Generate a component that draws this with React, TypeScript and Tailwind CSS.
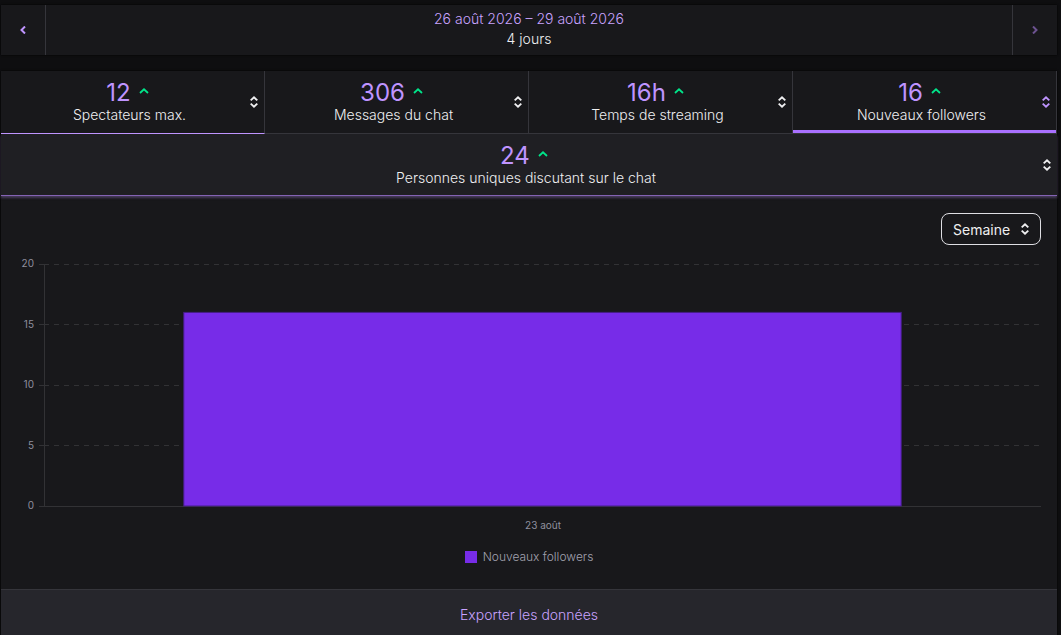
import { useState } from "react";

type Stat = { value: string; label: string };

const stats: Stat[] = [
  { value: "12", label: "Spectateurs max." },
  { value: "306", label: "Messages du chat" },
  { value: "16h", label: "Temps de streaming" },
  { value: "16", label: "Nouveaux followers" },
];

const ticks = [20, 15, 10, 5, 0];
const barValue = 16;
const maxValue = 20;

function Chevron({ direction }: { direction: "left" | "right" }) {
  return (
    <svg width="6" height="8" viewBox="0 0 6 8" fill="none" stroke="currentColor" strokeWidth="2" aria-hidden="true">
      <path d={direction === "left" ? "M5 0.5 1.5 4 5 7.5" : "M1 0.5 4.5 4 1 7.5"} />
    </svg>
  );
}

function UpArrow() {
  return (
    <svg className="mb-0.5" width="10" height="6" viewBox="0 0 10 6" fill="none" stroke="#00e58a" strokeWidth="1.8" aria-hidden="true">
      <path d="M1 5 5 1.3 9 5" />
    </svg>
  );
}

function Sorter() {
  return (
    <svg className="shrink-0" width="8" height="12" viewBox="0 0 8 12" fill="none" stroke="currentColor" strokeWidth="1.9" aria-hidden="true">
      <path d="M0.7 4.4 4 1.4 7.3 4.4M0.7 7.6 4 10.6 7.3 7.6" />
    </svg>
  );
}

function StatContent({ value, label }: Stat) {
  return (
    <span className="flex min-w-0 flex-1 flex-col items-center">
      <span className="flex items-center gap-2 pr-1">
        <span className="pt-0.5 text-2xl leading-6 text-[#bf94ff]">{value}</span>
        <UpArrow />
      </span>
      <span className="text-sm leading-5 font-light text-[#efeff1]">{label}</span>
    </span>
  );
}

function Chart() {
  return (
    <figure className="px-4 pt-3">
      <div className="flex">
        <div className="flex h-[254px] w-[17px] flex-col justify-between text-right text-[10px] leading-3 text-[#8f8f9e]">
          {ticks.map((t) => (
            <span key={t}>{t}</span>
          ))}
        </div>
        <div className="min-w-0 flex-1 pt-[7px] pl-[5px]">
          <svg className="block h-[243px] w-full overflow-visible" role="img" aria-label="Nouveaux followers : 16">
            <g stroke="#323235" strokeWidth="1" shapeRendering="crispEdges">
              {ticks.map((t, i) => {
                const y = Math.floor(i * 60.5) + 0.5;
                return (
                  <g key={t}>
                    <line x1="0" x2="5" y1={y} y2={y} />
                    <line x1="5" x2="100%" y1={y} y2={y} strokeDasharray={t === 0 ? undefined : "5 5"} />
                  </g>
                );
              })}
              <line x1="5.5" x2="5.5" y1="0" y2="243" />
            </g>
            <rect
              x="14.45%"
              y={242 - (barValue / maxValue) * 242}
              width="71.6%"
              height={(barValue / maxValue) * 242}
              fill="#772ce8"
              stroke="#451f86"
              strokeWidth="1"
            />
          </svg>
        </div>
      </div>
      <p className="mt-1 pl-7 text-center text-[10px] leading-5 text-[#8f8f9e]">23 août</p>
      <figcaption className="mt-3 flex h-5 items-center justify-center gap-1.5">
        <span className="size-3 bg-[#772ce8]" />
        <span className="text-xs leading-5 font-light text-[#a2a2b0]">Nouveaux followers</span>
      </figcaption>
    </figure>
  );
}

export default function App() {
  const [selected, setSelected] = useState(3);
  return (
    <div className="min-h-screen bg-[#0e0e10] pt-[5px] pr-1 pl-px font-['Inter',sans-serif] text-[#efeff1]">
      <header className="flex h-[50px] bg-[#18181b] shadow-[0_0_2px_#000]">
        <button aria-label="Période précédente" className="flex w-[45px] items-center justify-center border-r border-[#35353b] text-[#bf94ff]">
          <Chevron direction="left" />
        </button>
        <div className="flex flex-1 flex-col items-center justify-center pb-0.5 text-sm leading-5 font-light">
          <button className="text-[#c9a3ff]">26 août 2026 – 29 août 2026</button>
          <span>4 jours</span>
        </div>
        <button disabled aria-label="Période suivante" className="flex w-[45px] items-center justify-center border-l border-[#35353b] text-[#6c5290]">
          <Chevron direction="right" />
        </button>
      </header>

      <main className="mt-4 bg-[#18181b] shadow-[0_0_2px_#000]">
        <div className="grid grid-cols-4">
          {stats.map((s, i) => (
            <button
              key={s.label}
              aria-pressed={selected === i}
              onClick={() => setSelected(i)}
              className={
                "relative flex h-[63px] items-center border-r border-b border-r-[#35353b] pt-1.5 pr-1.5 pb-1.5 pl-2 " +
                (i === 0 ? "border-b-[#bf94ff]" : "border-b-[#35353b]")
              }
            >
              <StatContent {...s} />
              <span className={selected === i ? "text-[#bf94ff]" : "text-[#efeff1]"}>
                <Sorter />
              </span>
              {selected === i && <span className="absolute inset-x-0 bottom-0 h-[3px] bg-[#a970ff]" />}
            </button>
          ))}
        </div>
        <button className="flex h-[62px] w-full items-center border-b border-[#8463b4] bg-[#1f1f23] pt-1.5 pr-1.5 pb-1.5 pl-2 shadow-[0_2px_2px_#453a59]">
          <StatContent value="24" label="Personnes uniques discutant sur le chat" />
          <Sorter />
        </button>

        <div className="flex justify-end px-4 pt-[17px]">
          <div className="relative flex">
            <select
              aria-label="Intervalle"
              className="h-8 w-[100px] appearance-none rounded-lg border border-[#dedee3] bg-transparent pt-px pl-[11px] text-sm leading-5 font-normal text-[#efeff1]"
            >
              <option>Semaine</option>
              <option>Jour</option>
            </select>
            <span className="pointer-events-none absolute inset-y-0 right-3 flex items-center">
              <Sorter />
            </span>
          </div>
        </div>

        <Chart />

        <footer className="mt-[22px] border-t border-[#35353b] bg-[#26262c]">
          <button className="flex h-[50px] w-full items-center justify-center text-sm font-light text-[#c9a3ff]">
            Exporter les données
          </button>
        </footer>
      </main>
    </div>
  );
}
